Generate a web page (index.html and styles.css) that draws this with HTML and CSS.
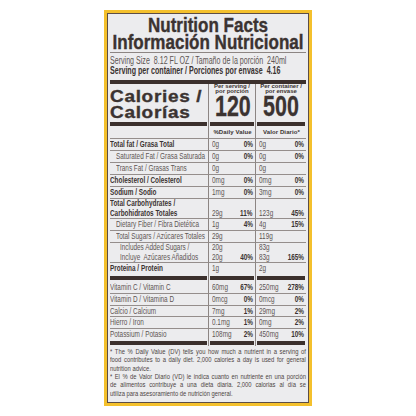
FILE: index.html
```html
<!DOCTYPE html>
<html lang="en">
<head>
<meta charset="utf-8">
<title>Nutrition Facts</title>
<link rel="stylesheet" href="styles.css">
</head>
<body>
<div class="pack">
  <div class="label">
    <h1 class="title"><span class="tl">Nutrition Facts</span><span class="tl">Información Nutricional</span></h1>
    <div class="serving"><span class="sq">Serving Size&nbsp; 8.12 FL OZ / Tamaño de la porción&nbsp; 240ml</span></div>
    <div class="serving strong"><span class="sq">Serving per container / Porciones por envase&nbsp; 4.16</span></div>
    <div class="fullbar"></div>

    <div class="row cal">
      <div class="c1 calname"><span class="wide">Calories /<br>Calorías</span></div>
      <div class="c2 calcell"><div class="per">Per serving /<br>por porción</div><div class="big">120</div></div>
      <div class="c3 calcell"><div class="per">Per container /<br>por envase</div><div class="big">500</div></div>
    </div>
    <div class="row barrow"><div></div><div></div><div></div></div>

    <div class="row head">
      <div class="c1"></div>
      <div class="c2 dv">%Daily Value</div>
      <div class="c3 dv">Valor Diario*</div>
    </div>

    <div class="row"><div class="c1 b"><span class="sq">Total fat / Grasa Total</span></div><div class="c2"><span class="a">0g</span><b class="p">0%</b></div><div class="c3"><span class="a">0g</span><b class="p">0%</b></div></div>
    <div class="row"><div class="c1 ind"><span class="sq">Saturated Fat / Grasa Saturada</span></div><div class="c2"><span class="a">0g</span><b class="p">0%</b></div><div class="c3"><span class="a">0g</span><b class="p">0%</b></div></div>
    <div class="row"><div class="c1 ind"><span class="sq">Trans Fat / Grasas Trans</span></div><div class="c2"><span class="a">0g</span></div><div class="c3"><span class="a">0g</span></div></div>
    <div class="row"><div class="c1 b"><span class="sq">Cholesterol / Colesterol</span></div><div class="c2"><span class="a">0mg</span><b class="p">0%</b></div><div class="c3"><span class="a">0mg</span><b class="p">0%</b></div></div>
    <div class="row"><div class="c1 b"><span class="sq">Sodium / Sodio</span></div><div class="c2"><span class="a">1mg</span><b class="p">0%</b></div><div class="c3"><span class="a">3mg</span><b class="p">0%</b></div></div>
    <div class="row two"><div class="c1 b"><span class="sq">Total Carbohydrates /<br>Carbohidratos Totales</span></div><div class="c2"><span class="a">29g</span><b class="p">11%</b></div><div class="c3"><span class="a">123g</span><b class="p">45%</b></div></div>
    <div class="row"><div class="c1 ind"><span class="sq">Dietary Fiber / Fibra Dietética</span></div><div class="c2"><span class="a">1g</span><b class="p">4%</b></div><div class="c3"><span class="a">4g</span><b class="p">15%</b></div></div>
    <div class="row"><div class="c1 ind"><span class="sq">Total Sugars / Azúcares Totales</span></div><div class="c2"><span class="a">29g</span></div><div class="c3"><span class="a">119g</span></div></div>
    <div class="row two"><div class="c1 ind2"><span class="sq">Includes Added Sugars /<br>Incluye&nbsp; Azúcares Añadidos</span></div><div class="c2"><span class="a">20g<br>20g</span><b class="p">40%</b></div><div class="c3"><span class="a">83g<br>83g</span><b class="p">165%</b></div></div>
    <div class="row last"><div class="c1 b"><span class="sq">Proteina / Protein</span></div><div class="c2"><span class="a">1g</span></div><div class="c3"><span class="a">2g</span></div></div>
    <div class="row barrow mid"><div></div><div></div><div></div></div>

    <div class="row vit"><div class="c1"><span class="sq">Vitamin C / Vitamin C</span></div><div class="c2"><span class="a">60mg</span><b class="p">67%</b></div><div class="c3"><span class="a">250mg</span><b class="p">278%</b></div></div>
    <div class="row vit"><div class="c1"><span class="sq">Vitamin D / Vitamina D</span></div><div class="c2"><span class="a">0mcg</span><b class="p">0%</b></div><div class="c3"><span class="a">0mcg</span><b class="p">0%</b></div></div>
    <div class="row vit"><div class="c1"><span class="sq">Calcio / Calcium</span></div><div class="c2"><span class="a">7mg</span><b class="p">1%</b></div><div class="c3"><span class="a">29mg</span><b class="p">2%</b></div></div>
    <div class="row vit"><div class="c1"><span class="sq">Hierro / Iron</span></div><div class="c2"><span class="a">0.1mg</span><b class="p">1%</b></div><div class="c3"><span class="a">0mg</span><b class="p">2%</b></div></div>
    <div class="row vit last"><div class="c1"><span class="sq">Potassium / Potasio</span></div><div class="c2"><span class="a">108mg</span><b class="p">2%</b></div><div class="c3"><span class="a">450mg</span><b class="p">10%</b></div></div>
    <div class="row barrow"><div></div><div></div><div></div></div>

    <div class="note">
      <span class="fl">* The % Daily Value (DV) tells you how much a nutrient in a serving of</span>
      <span class="fl">food contributes to a daily diet. 2,000 calories a day is used for general</span>
      <span class="fl end">nutrition advice.</span>
      <span class="fl">* El % de Valor Diario (VD) le indica cuanto en nutriente en una porción</span>
      <span class="fl">de alimentos contribuye a una dieta diaria. 2,000 calorias al día se</span>
      <span class="fl end">utiliza para asesoramiento de nutrición general.</span>
    </div>
  </div>
</div>
</body>
</html>
```

FILE: styles.css
```css
* { box-sizing: border-box; }
html, body { margin: 0; padding: 0; background: #ffffff; }
body {
  font-family: "Liberation Sans", Arial, sans-serif;
  color: #3b3331;
  width: 416px;
  height: 416px;
  overflow: hidden;
}
.pack {
  margin: 10px 0 0 104px;
  width: 208px;
  height: 396px;
  background: #f4c02c;
  padding: 3px;
}
.label {
  background: #ececee;
  border: 1px solid #5c4d46;
  height: 100%;
  padding: 0 2px;
  overflow: hidden;
}

/* squeezed (condensed) text */
.sq, .tl, .a, .p {
  white-space: nowrap;
  transform: scaleX(0.71);
  transform-origin: left center;
}
.sq, .tl { display: block; }

.title {
  margin: 0;
  font-size: 21px;
  line-height: 17px;
  font-weight: bold;
  padding: 2px 0 2px;
  border-bottom: 1px solid #8c8583;
  color: #3b3331;
  -webkit-text-stroke: 0.4px #3b3331;
}
.tl {
  width: 242px;
  margin-left: -23px;
  text-align: center;
  transform: scaleX(0.81);
  transform-origin: center;
}
.serving {
  font-size: 10px;
  line-height: 10px;
  color: #5e5654;
}
.serving:first-of-type { margin-top: 3px; }
.serving.strong { font-weight: bold; color: #3b3331; }
.serving .sq { transform: scaleX(0.71); }
.fullbar {
  height: 4px;
  background: #3b302d;
  margin-top: 4px;
}

.row {
  display: grid;
  grid-template-columns: 98px 47px 51px;
  font-size: 9px;
  line-height: 11px;
}
.row > div { border-bottom: 1px solid #958e8c; }
.row.last > div { border-bottom: none; }
.row.vit { line-height: 10.75px; }
.row.two { line-height: 9.5px; }

.row .c1 { color: #5e5654; padding-left: 0; }
.row .c1.b { font-weight: bold; color: #3b3331; }
.row .c1.ind { padding-left: 6px; }
.row .c1.ind2 { padding-left: 10px; }

.row > .c2, .row > .c3 {
  border-left: 1px solid #8c8583;
  display: grid;
  padding: 0 2px 0 3px;
  color: #5e5654;
}
.a, .p { grid-area: 1 / 1; align-self: end; }
.a { justify-self: start; }
.p {
  justify-self: end;
  transform-origin: right center;
  color: #3b3331;
}

/* calories */
.cal { height: 37px; }
.cal > div { border-bottom: none; }
.row > .calname {
  font-weight: bold;
  font-size: 16.5px;
  line-height: 16px;
  letter-spacing: 0.6px;
  padding-top: 4px;
  color: #3b3331;
  -webkit-text-stroke: 0.35px #3b3331;
}
.wide {
  display: block;
  white-space: nowrap;
  transform: scaleX(1.15);
  transform-origin: left center;
}
.row > .calcell {
  display: block;
  padding: 0;
  text-align: center;
  color: #3b3331;
}
.per {
  font-weight: bold;
  font-size: 6px;
  line-height: 5px;
  white-space: nowrap;
}
.big {
  font-weight: bold;
  font-size: 29px;
  line-height: 25px;
  transform: scaleX(0.74);
  transform-origin: center;
  -webkit-text-stroke: 0.3px #3b3331;
}

.barrow > div {
  height: 6px;
  padding: 1px 1px 1px 0;
  background: #3b302d;
  background-clip: content-box;
  border-bottom: none !important;
}
.barrow > div + div {
  border-left: 1px solid #8c8583;
  padding-left: 1px;
}
.barrow.mid > div { height: 8px; padding-top: 2px; padding-bottom: 2px; }

.head .dv {
  font-weight: bold;
  font-size: 6px;
  letter-spacing: 0.1px;
  justify-content: center;
  align-items: center;
  display: flex;
  color: #3b3331;
}

.note {
  width: 248px;
  margin-top: 2px;
  font-size: 7.4px;
  line-height: 8.4px;
  color: #4d4543;
  transform: scaleX(0.79);
  transform-origin: left top;
}
.fl {
  display: block;
  text-align: justify;
  text-align-last: justify;
}
.fl.end { text-align-last: left; }
```
